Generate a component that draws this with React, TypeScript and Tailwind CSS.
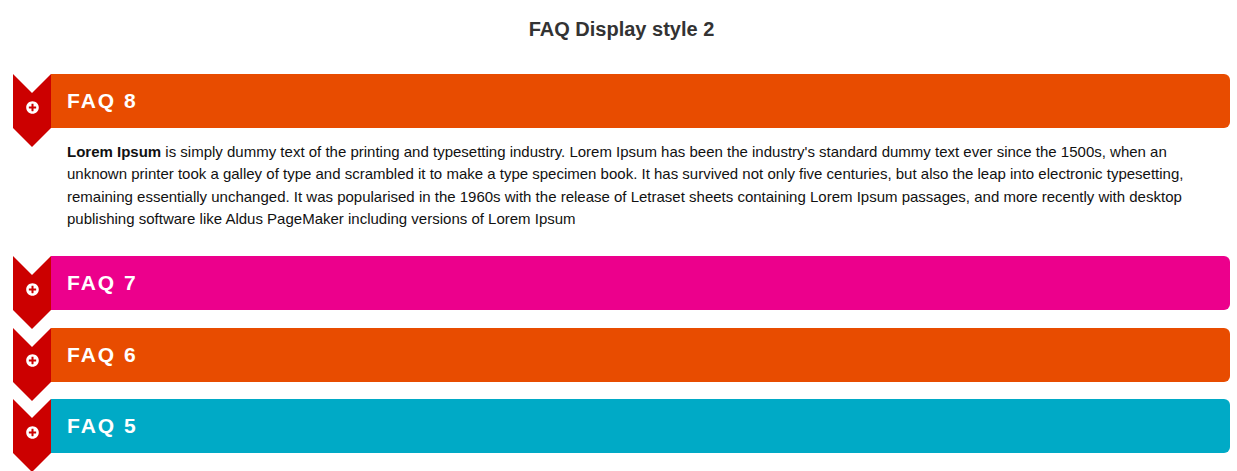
import { FaPlusCircle } from 'react-icons/fa';

const FAQS = [
  { id: 8, title: 'FAQ 8', color: 'bg-[#e84c00]', open: true },
  { id: 7, title: 'FAQ 7', color: 'bg-[#ec008c]', open: false },
  { id: 6, title: 'FAQ 6', color: 'bg-[#e84c00]', open: false },
  { id: 5, title: 'FAQ 5', color: 'bg-[#00aac6]', open: false },
];

function Chevron() {
  return (
    <div className="relative h-[54px] w-[38px] shrink-0">
      <svg width="38" height="73" viewBox="0 0 38 73" className="absolute left-0 top-0 overflow-visible">
        <polygon points="0,0 19,19 38,0 38,54 19,73 0,54" fill="#cc0000" />
      </svg>
      <FaPlusCircle className="absolute left-[12.5px] top-[26.5px] text-white" size={13} />
    </div>
  );
}

export default function App() {
  return (
    <div className="min-h-[471px] bg-white pl-[13px] pr-[7px] pt-[17px] font-['Liberation_Sans',Arial,sans-serif]">
      <h2 className="mb-[33px] text-center text-[20px] font-bold leading-[24px] text-[#333]">FAQ Display style 2</h2>
      <div>
        {FAQS.map((faq) => (
          <div key={faq.id} className="mb-[17.5px]">
            <div className="relative z-10 flex">
              <Chevron />
              <div className={`flex h-[54px] flex-1 items-center rounded-r-[6px] pl-[16px] ${faq.color}`}>
                <span className="text-[21px] font-bold tracking-[2px] text-white">{faq.title}</span>
              </div>
            </div>
            {faq.open && (
              <div className="pb-[8px] pl-[54px] pr-[40px] pt-[12.5px] text-[15px] leading-[22.5px] text-[#111]">
                <p>
                  <strong>Lorem Ipsum</strong> is simply dummy text of the printing and typesetting industry. Lorem Ipsum
                  has been the industry's standard dummy text ever since the 1500s, when an unknown printer took a galley
                  of type and scrambled it to make a type specimen book. It has survived not only five centuries, but also
                  the leap into electronic typesetting, remaining essentially unchanged. It was popularised in the 1960s
                  with the release of Letraset sheets containing Lorem Ipsum passages, and more recently with desktop
                  publishing software like Aldus PageMaker including versions of Lorem Ipsum
                </p>
              </div>
            )}
          </div>
        ))}
      </div>
    </div>
  );
}
